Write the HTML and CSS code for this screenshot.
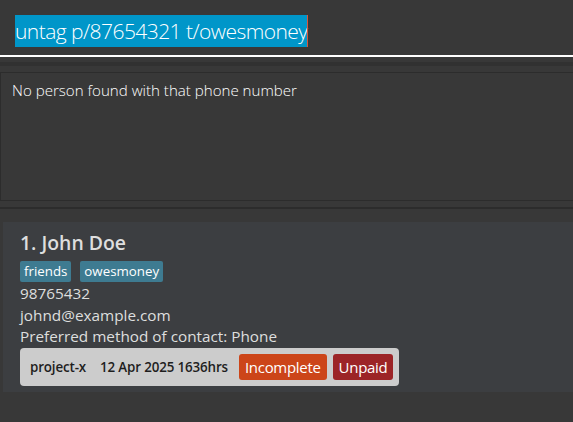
FILE: index.html
```html
<!DOCTYPE html>
<html>
<head>
<meta charset="utf-8">
<link rel="stylesheet" href="styles.css">
</head>
<body>
<div class="app">
  <div class="command">
    <span class="command-text">untag p/87654321 t/owesmoney</span><span class="caret"></span>
  </div>
  <div class="split split-top"></div>
  <div class="result">No person found with that phone number</div>
  <div class="split split-mid"></div>
  <div class="card">
    <div class="name">1. John Doe</div>
    <div class="tags">
      <span class="tag">friends</span>
      <span class="tag">owesmoney</span>
    </div>
    <div class="line">98765432</div>
    <div class="line">johnd@example.com</div>
    <div class="line">Preferred method of contact: Phone</div>
    <div class="task">
      <span class="task-name">project-x</span>
      <span class="task-date">12 Apr 2025 1636hrs</span>
      <span class="badge badge-incomplete">Incomplete</span>
      <span class="badge badge-unpaid">Unpaid</span>
    </div>
  </div>
</div>
</body>
</html>
```

FILE: styles.css
```css
html, body {
  margin: 0;
  padding: 0;
  background: #383838;
}
.app {
  width: 573px;
  height: 422px;
  background: #383838;
  font-family: "Open Sans", "Noto Sans", sans-serif;
  overflow: hidden;
}
.command {
  height: 40px;
  padding: 15px 0 0 15px;
  border-bottom: 2px solid #ffffff;
  display: flex;
  align-items: flex-start;
}
.command-text {
  background: #0096c9;
  color: #ffffff;
  font-weight: 300;
  font-size: 21px;
  line-height: 32px;
  height: 32px;
  white-space: nowrap;
  letter-spacing: -0.55px;
}
.caret {
  width: 1px;
  height: 32px;
  background: #d6563c;
}
.split-top {
  height: 15px;
  box-sizing: border-box;
  border-top: 5px solid #383838;
  border-bottom: 6px solid #383838;
  background: #313131;
}
.result {
  border: 1px solid #2c2c2c;
  border-right: none;
  padding: 6px 0 0 11px;
  box-sizing: border-box;
  height: 129px;
  color: #ffffff;
  font-weight: 300;
  font-size: 15.1px;
  line-height: 22px;
}
.split-mid {
  height: 21px;
  box-sizing: border-box;
  border-top: 6px solid #383838;
  background: #383838;
}
.split-mid::before {
  content: "";
  display: block;
  height: 2px;
  background: #2c2c2c;
}
.card {
  margin-left: 3px;
  height: 170px;
  box-sizing: border-box;
  background: #3c3e41;
  padding: 8px 0 0 17px;
  color: #dedede;
}
.name {
  font-size: 19.4px;
  font-weight: 600;
  line-height: 26px;
  margin-bottom: 5px;
}
.tags {
  display: flex;
  gap: 9px;
  height: 21px;
  margin-bottom: 1px;
}
.tag {
  background: #3e7b91;
  color: #ffffff;
  font-size: 13.3px;
  line-height: 21px;
  padding: 0 4px;
  border-radius: 2px;
}
.line {
  font-size: 15.3px;
  line-height: 21.7px;
}
.task {
  display: inline-flex;
  align-items: center;
  background: #cccccc;
  border-radius: 4px;
  height: 38px;
  box-sizing: border-box;
  padding: 0 6px 0 10px;
  color: #1e1e1e;
  font-weight: 600;
  font-size: 13.4px;
  letter-spacing: -0.15px;
}
.task-name {
  margin-right: 14px;
}
.task-date {
  margin-right: 11px;
}
.badge {
  color: #ffffff;
  font-weight: 400;
  font-size: 15px;
  line-height: 26px;
  height: 26px;
  padding: 0 6px;
  border-radius: 3px;
  letter-spacing: -0.3px;
}
.badge-incomplete {
  background: #cc4519;
  margin-right: 6px;
}
.badge-unpaid {
  background: #9c2427;
}
```
